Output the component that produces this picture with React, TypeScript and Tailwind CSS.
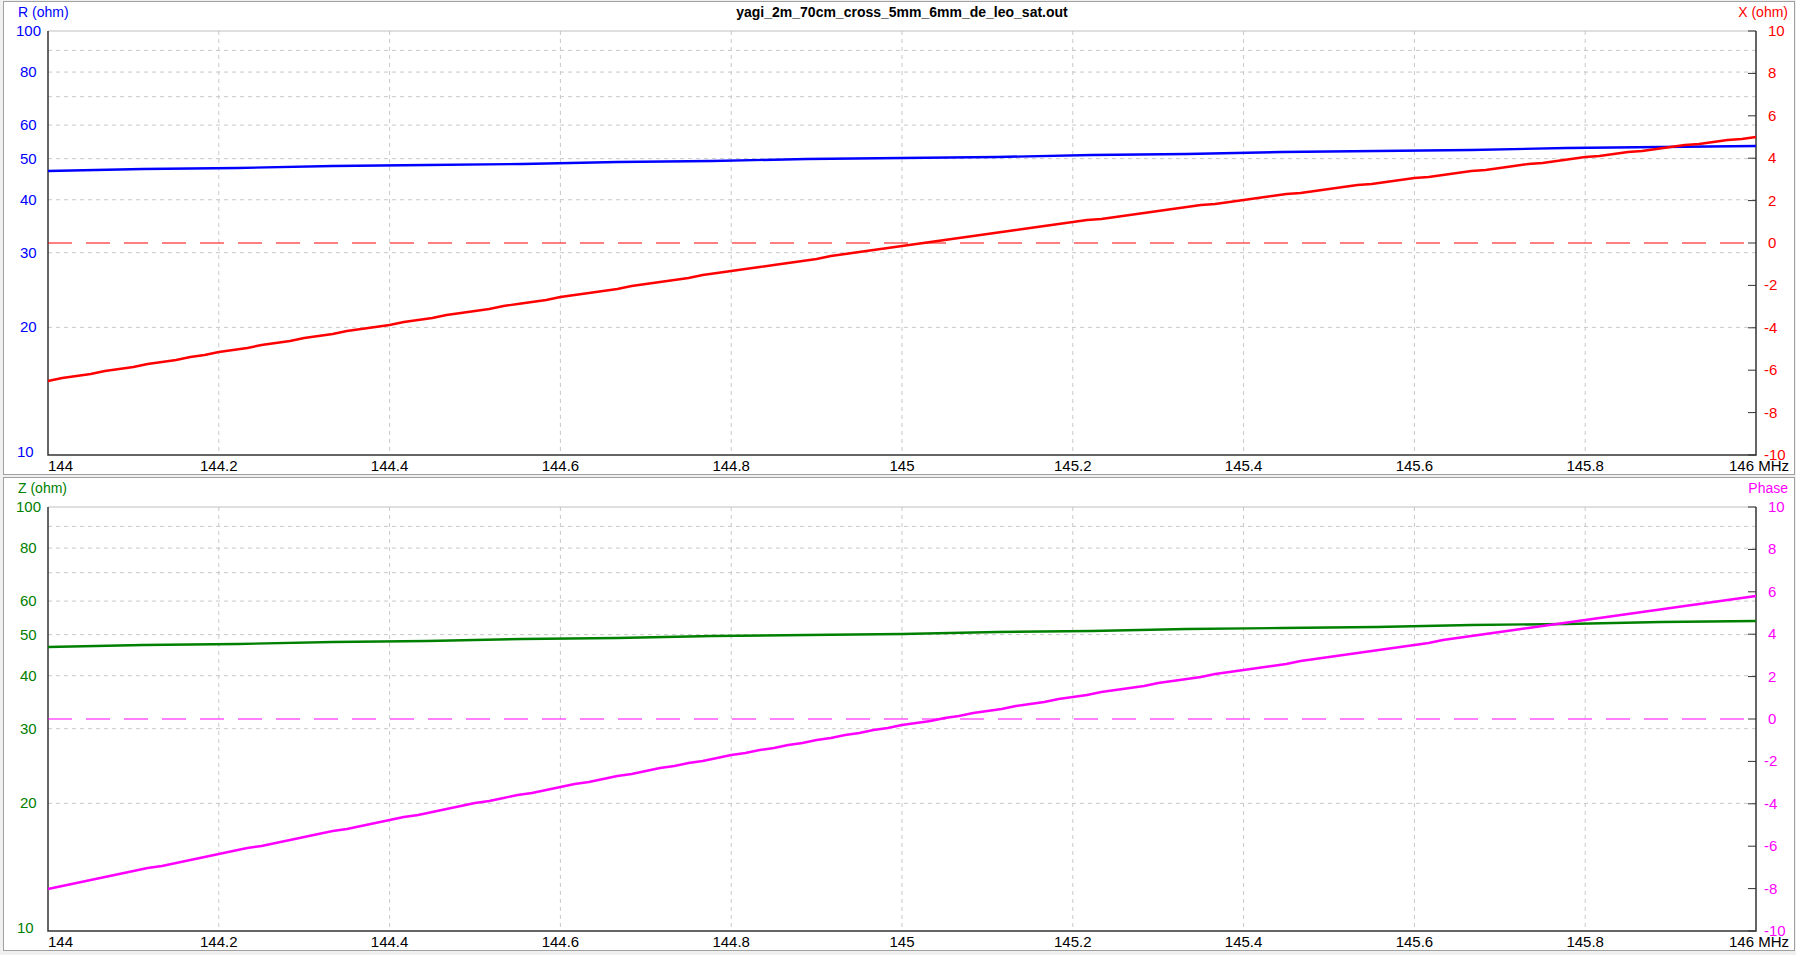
import React from "react";

const W = 1790, H = 472;
const L = 44, R = 1752, T = 29, B = 453;
const PW = R - L, PH = B - T;

function yLog(v: number) { return B - PH * Math.log10(v / 10); }
function yLin(v: number) { return B - PH * (v + 10) / 20; }
function xF(f: number) { return L + PW * (f - 144) / 2; }

function stairs(fn: (t: number) => number, steps: number) {
  const pts: string[] = [];
  for (let i = 0; i <= steps; i++) {
    const t = i / steps;
    const x = L + PW * t;
    const y = Math.round(fn(t));
    pts.push(`${x.toFixed(1)},${y}`);
  }
  return pts.join(" ");
}

function Chart(props: {
  leftLabel: string; rightLabel: string; leftColor: string; rightColor: string;
  title?: string; lf: (t: number) => number; rf: (t: number) => number;
}) {
  const { leftLabel, rightLabel, leftColor, rightColor, title, lf, rf } = props;
  const hGrid = [20, 30, 40, 50, 60, 70, 80, 90];
  const leftLabels = [10, 20, 30, 40, 50, 60, 80, 100];
  const rightLabels = [-10, -8, -6, -4, -2, 0, 2, 4, 6, 8, 10];
  const freqs = [144, 144.2, 144.4, 144.6, 144.8, 145, 145.2, 145.4, 145.6, 145.8];
  const font = { fontFamily: "'Liberation Sans', Arial, sans-serif", fontSize: 14 } as const;
  return (
    <svg width={W} height={H} className="block bg-white" style={font}>
      {hGrid.map((v) => (
        <line key={v} x1={L} x2={R} y1={yLog(v)} y2={yLog(v)} stroke="#c8c8c8" strokeDasharray="4 4" />
      ))}
      {freqs.slice(1).map((f) => (
        <line key={f} x1={xF(f)} x2={xF(f)} y1={T} y2={B} stroke="#c8c8c8" strokeDasharray="4 4" />
      ))}
      <line x1={L} x2={R} y1={T} y2={T} stroke="#c0c0c0" />
      <polyline points={`${L},${T} ${L},${B} ${R},${B} ${R},${T}`} fill="none" stroke="#333" strokeWidth={1.5} />
      {rightLabels.map((v) => (
        <line key={v} x1={R - 8} x2={R} y1={yLin(v)} y2={yLin(v)} stroke="#333" />
      ))}
      <line x1={L} x2={R} y1={yLin(0)} y2={yLin(0)} stroke={rightColor} strokeDasharray="24 14" strokeWidth={1} />
      <polyline points={stairs(lf, 18)} fill="none" stroke={leftColor} strokeWidth={2.4} />
      <polyline points={stairs(rf, 120)} fill="none" stroke={rightColor} strokeWidth={2.4} />
      <text x={14} y={15} fill={leftColor}>{leftLabel}</text>
      <text x={1784} y={15} fill={rightColor} textAnchor="end">{rightLabel}</text>
      {title && <text x={(L + R) / 2} y={15} textAnchor="middle" fontWeight="bold" fill="#000">{title}</text>}
      {leftLabels.map((v) => (
        <text key={v} x={v === 100 ? 12 : v === 10 ? 13 : 16} y={yLog(v) + (v === 10 ? 2 : 5)} fill={leftColor} fontSize={15}>{v}</text>
      ))}
      {rightLabels.map((v) => (
        <text key={v} x={v < 0 ? R + 8 : R + 12} y={yLin(v) + 5} fill={rightColor} fontSize={15}>{v}</text>
      ))}
      {freqs.map((f) => (
        <text key={f} x={xF(f)} y={B + 16} textAnchor={f === 144 ? "start" : "middle"} fill="#000" fontSize={15}>{String(f)}</text>
      ))}
      <text x={1785} y={B + 16} textAnchor="end" fill="#000" fontSize={15}>146 MHz</text>
    </svg>
  );
}

export default function App() {
  return (
    <div className="w-[1796px] h-[955px] bg-[#f0f0f0] flex flex-col gap-[2px] pl-[3px] pt-[1px]">
      <div className="border border-[#a0a0a0] w-[1792px] h-[474px] overflow-hidden">
        <Chart
          title="yagi_2m_70cm_cross_5mm_6mm_de_leo_sat.out"
          leftLabel="R (ohm)" rightLabel="X (ohm)" leftColor="#0000ff" rightColor="#ff0000"
          lf={(t) => yLog(46.8 + 6.8 * t)}
          rf={(t) => yLin(-6.5 + 11.5 * t + 0.6 * Math.sin(Math.PI * t))}
        />
      </div>
      <div className="border border-[#a0a0a0] w-[1792px] h-[474px] overflow-hidden">
        <Chart
          leftLabel="Z (ohm)" rightLabel="Phase" leftColor="#008000" rightColor="#ff00ff"
          lf={(t) => yLog(46.8 + 7 * t)}
          rf={(t) => yLin(-8 + 13.8 * t + 0.8 * Math.sin(Math.PI * t))}
        />
      </div>
    </div>
  );
}
